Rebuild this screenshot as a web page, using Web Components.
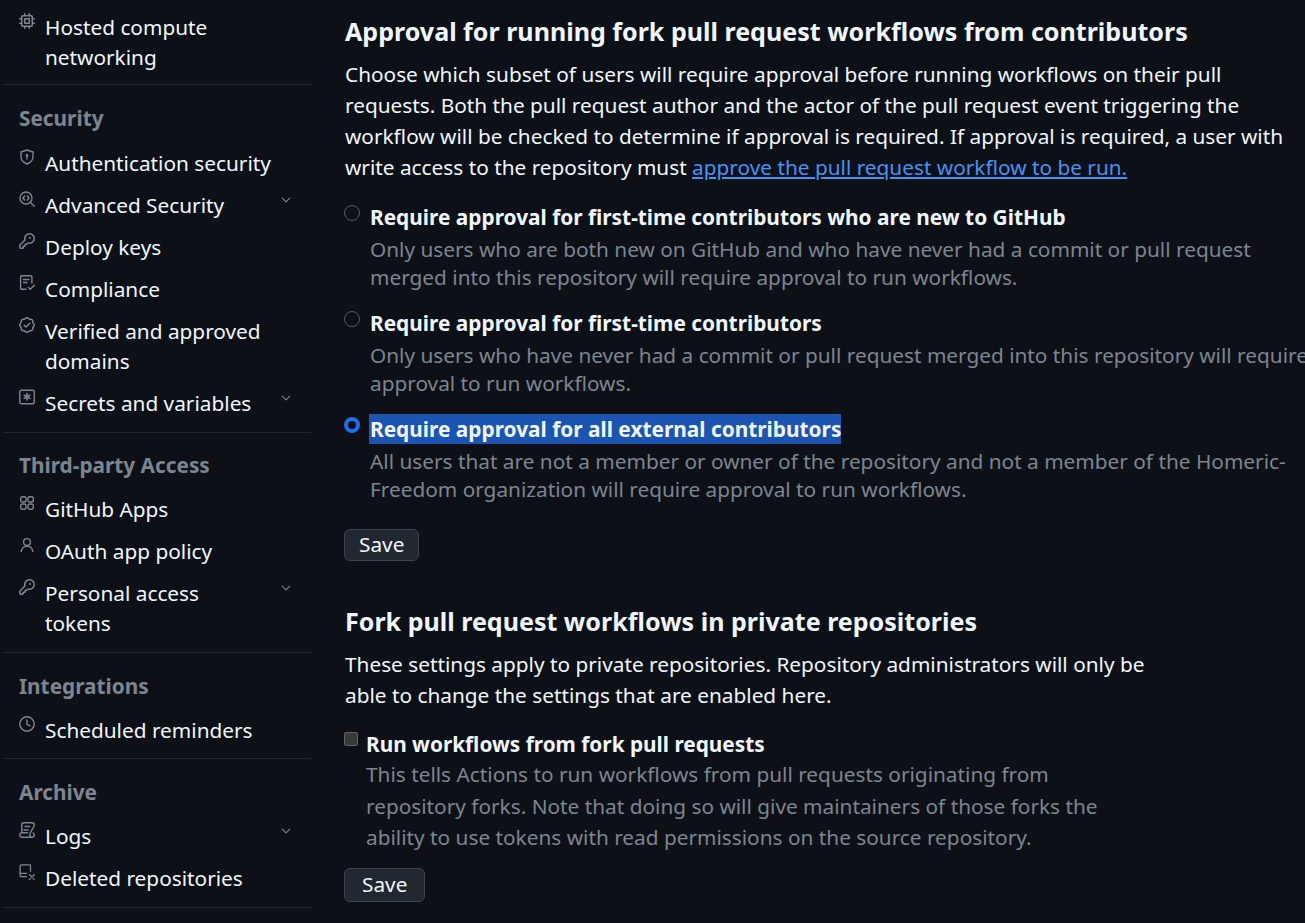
<!DOCTYPE html>
<html lang="en">
<head>
<meta charset="utf-8">
<title>Actions settings</title>
<style>
  html, body { margin: 0; height: 923px; overflow: hidden; background: #0d1117; }
  body { font-family: "Noto Sans", "Liberation Sans", sans-serif; color: #f0f6fc; font-size: 20.8px; }
</style>
</head>
<body>
<settings-page>
  <side-nav slot="side">
    <nav-group flush>
      <nav-item icon="cpu">Hosted compute networking</nav-item>
    </nav-group>
    <nav-group style="--gap: 9px" title="Security">
      <nav-item icon="shield">Authentication security</nav-item>
      <nav-item icon="codescan" more>Advanced Security</nav-item>
      <nav-item icon="key">Deploy keys</nav-item>
      <nav-item icon="checklist">Compliance</nav-item>
      <nav-item icon="verified">Verified and approved domains</nav-item>
      <nav-item icon="asterisk" more>Secrets and variables</nav-item>
    </nav-group>
    <nav-group style="--top: 17px" title="Third-party Access">
      <nav-item icon="apps">GitHub Apps</nav-item>
      <nav-item icon="person">OAuth app policy</nav-item>
      <nav-item icon="key" more>Personal access tokens</nav-item>
    </nav-group>
    <nav-group style="--end: 7px" title="Integrations">
      <nav-item icon="clock">Scheduled reminders</nav-item>
    </nav-group>
    <nav-group title="Archive">
      <nav-item icon="log" more>Logs</nav-item>
      <nav-item icon="deleted">Deleted repositories</nav-item>
    </nav-group>
  </side-nav>

  <form-section title="Approval for running fork pull request workflows from contributors">
    <span slot="intro">Choose which subset of users will require approval before running workflows on their pull requests. Both the pull request author and the actor of the pull request event triggering the workflow will be checked to determine if approval is required. If approval is required, a user with write access to the repository must <a-link>approve the pull request workflow to be run.</a-link></span>
    <radio-option label="Require approval for first-time contributors who are new to GitHub">Only users who are both new on GitHub and who have never had a commit or pull request merged into this repository will require approval to run workflows.</radio-option>
    <radio-option label="Require approval for first-time contributors">Only users who have never had a commit or pull request merged into this repository will require approval to run workflows.</radio-option>
    <radio-option checked label="Require approval for all external contributors">All users that are not a member or owner of the repository and not a member of the Homeric-Freedom organization will require approval to run workflows.</radio-option>
    <save-button>Save</save-button>
  </form-section>

  <form-section narrow second title="Fork pull request workflows in private repositories">
    <span slot="intro">These settings apply to private repositories. Repository administrators will only be able to change the settings that are enabled here.</span>
    <check-option label="Run workflows from fork pull requests">This tells Actions to run workflows from pull requests originating from repository forks. Note that doing so will give maintainers of those forks the ability to use tokens with read permissions on the source repository.</check-option>
    <save-button wide>Save</save-button>
  </form-section>
</settings-page>

<script>
const ICONS = {
  cpu: '<path fill="currentColor" d="M6.5.75a.75.75 0 0 0-1.5 0V2H3.75A1.75 1.75 0 0 0 2 3.75V5H.75a.75.75 0 0 0 0 1.5H2v3H.75a.75.75 0 0 0 0 1.5H2v1.25c0 .966.784 1.75 1.75 1.75H5v1.25a.75.75 0 0 0 1.5 0V14h3v1.25a.75.75 0 0 0 1.5 0V14h1.25A1.75 1.75 0 0 0 14 12.25V11h1.25a.75.75 0 0 0 0-1.5H14v-3h1.25a.75.75 0 0 0 0-1.5H14V3.75A1.75 1.75 0 0 0 12.25 2H11V.75a.75.75 0 0 0-1.5 0V2h-3Zm5.75 11.75h-8.5a.25.25 0 0 1-.25-.25v-8.5a.25.25 0 0 1 .25-.25h8.5a.25.25 0 0 1 .25.25v8.5a.25.25 0 0 1-.25.25ZM5.75 5h4.5a.75.75 0 0 1 .75.75v4.5a.75.75 0 0 1-.75.75h-4.5a.75.75 0 0 1-.75-.75v-4.5A.75.75 0 0 1 5.75 5Zm.75 4.5h3v-3h-3Z"/>',
  shield: '<g fill="none" stroke="currentColor" stroke-width="1.4" stroke-linejoin="round"><path d="M8 1 2 3v4.5c0 3.6 2.4 6 6 7.5 3.6-1.5 6-3.9 6-7.5V3Z"/></g><circle cx="8" cy="6.4" r="1.3" fill="currentColor"/><path d="M8 7v3" stroke="currentColor" stroke-width="1.4" stroke-linecap="round"/>',
  codescan: '<g fill="none" stroke="currentColor" stroke-width="1.4" stroke-linecap="round" stroke-linejoin="round"><circle cx="7" cy="7" r="6"/><path d="m11.4 11.4 3.9 3.9M5.6 5 3.9 7l1.7 2M8.4 5l1.7 2-1.7 2"/></g>',
  key: '<path fill="currentColor" d="M10.5 0a5.499 5.499 0 1 1-1.288 10.848l-.932.932a.75.75 0 0 1-.53.22H7v.75a.75.75 0 0 1-.22.53l-.5.5a.75.75 0 0 1-.53.22H5v.75a.75.75 0 0 1-.22.53l-.5.5a.75.75 0 0 1-.53.22h-2A1.75 1.75 0 0 1 0 14.25v-2c0-.199.079-.389.22-.53l4.932-4.932A5.5 5.5 0 0 1 10.5 0Zm-4 5.5c-.001.431.069.86.205 1.269a.75.75 0 0 1-.181.768L1.5 12.56v1.69c0 .138.112.25.25.25h1.69l.06-.06v-1.19a.75.75 0 0 1 .75-.75h1.19l.06-.06v-1.19a.75.75 0 0 1 .75-.75h1.19l1.023-1.025a.75.75 0 0 1 .768-.18A4 4 0 1 0 6.5 5.5ZM11 6a1 1 0 1 1 0-2 1 1 0 0 1 0 2Z"/>',
  checklist: '<g fill="none" stroke="currentColor" stroke-width="1.4" stroke-linecap="round" stroke-linejoin="round"><path d="M7 14.2H2.6a1 1 0 0 1-1-1V1.8a1 1 0 0 1 1-1h9.3a1 1 0 0 1 1 1V8"/><path d="M4.5 4.5h5.5M4.5 7.5h3.5M9.5 12.5l1.8 1.8 4-4"/></g>',
  verified: '<path fill="currentColor" d="m9.585.52.929.68c.153.112.331.186.518.215l1.138.175a2.678 2.678 0 0 1 2.24 2.24l.174 1.139c.029.187.103.365.215.518l.68.928a2.677 2.677 0 0 1 0 3.17l-.68.928a1.174 1.174 0 0 0-.215.518l-.175 1.138a2.678 2.678 0 0 1-2.241 2.241l-1.138.175a1.17 1.17 0 0 0-.518.215l-.928.68a2.677 2.677 0 0 1-3.17 0l-.928-.68a1.174 1.174 0 0 0-.518-.215L3.83 14.41a2.678 2.678 0 0 1-2.24-2.24l-.175-1.138a1.17 1.17 0 0 0-.215-.518l-.68-.928a2.677 2.677 0 0 1 0-3.17l.68-.928c.112-.153.186-.331.215-.518l.175-1.14a2.678 2.678 0 0 1 2.24-2.24l1.139-.175c.187-.029.365-.103.518-.215l.928-.68a2.677 2.677 0 0 1 3.17 0ZM7.303 1.728l-.927.68a2.67 2.67 0 0 1-1.18.489l-1.137.174a1.179 1.179 0 0 0-.987.987l-.174 1.136a2.677 2.677 0 0 1-.489 1.18l-.68.928a1.18 1.18 0 0 0 0 1.394l.68.927c.256.348.424.753.489 1.18l.174 1.137c.078.509.478.909.987.987l1.136.174a2.67 2.67 0 0 1 1.18.489l.928.68c.414.305.979.305 1.394 0l.927-.68a2.67 2.67 0 0 1 1.18-.489l1.137-.174a1.18 1.18 0 0 0 .987-.987l.174-1.136a2.67 2.67 0 0 1 .489-1.18l.68-.928a1.176 1.176 0 0 0 0-1.394l-.68-.927a2.686 2.686 0 0 1-.489-1.18l-.174-1.137a1.179 1.179 0 0 0-.987-.987l-1.136-.174a2.677 2.677 0 0 1-1.18-.489l-.928-.68a1.176 1.176 0 0 0-1.394 0ZM11.28 6.78l-3.75 3.75a.75.75 0 0 1-1.06 0L4.72 8.78a.751.751 0 0 1 .018-1.042.751.751 0 0 1 1.042-.018L7 8.94l3.22-3.22a.751.751 0 0 1 1.042.018.751.751 0 0 1 .018 1.042Z"/>',
  asterisk: '<rect x=".75" y="1.25" width="14.5" height="13.5" rx="1.5" fill="none" stroke="currentColor" stroke-width="1.4"/><path d="M8 4.6v6.4M5.2 6.2l5.6 3.2M10.8 6.2 5.2 9.4" stroke="currentColor" stroke-width="1.6" stroke-linecap="round"/>',
  apps: '<g fill="none" stroke="currentColor" stroke-width="1.4"><rect x="1.7" y="1.7" width="5.3" height="5.3" rx="1.8"/><rect x="9" y="1.7" width="5.3" height="5.3" rx="1.8"/><rect x="1.7" y="9" width="5.3" height="5.3" rx="1.8"/><rect x="9" y="9" width="5.3" height="5.3" rx="1.8"/></g>',
  person: '<g fill="none" stroke="currentColor" stroke-width="1.4" stroke-linecap="round"><circle cx="8" cy="5" r="3.4"/><path d="M2.2 14.6c.2-3 2.4-5.4 5.8-5.4s5.6 2.4 5.8 5.4"/></g>',
  clock: '<g fill="none" stroke="currentColor" stroke-width="1.4" stroke-linecap="round" stroke-linejoin="round"><circle cx="8" cy="8" r="7.2"/><path d="M8 4v4.4l3 1.5"/></g>',
  log: '<g fill="none" stroke="currentColor" stroke-width="1.4" stroke-linecap="round" stroke-linejoin="round"><path d="M13 .75H5A2.25 2.25 0 0 0 2.75 3v7M13 .75A2.25 2.25 0 0 1 15.25 3c0 2.8-4.5 6.8-4.5 10a2.25 2.25 0 0 0 4.5 0 2.2 2.2 0 0 0-1-1.9M13 15.25H3A2.25 2.25 0 0 1 .75 13 2.25 2.25 0 0 1 3 10.75h5.5"/><path d="M6 4.5h4.5M5 8h4"/></g>',
  deleted: '<g fill="none" stroke="currentColor" stroke-width="1.3" stroke-linecap="round" stroke-linejoin="round"><path d="M7.4 12.6H2.4a1.3 1.3 0 0 1-1.3-1.3V2.2A1.4 1.4 0 0 1 2.5.8h8.4a.6.6 0 0 1 .6.6V7.4"/><path d="M1.1 9.4h6.3M10.6 10.8l4.6 4.6M15.2 10.8l-4.6 4.6"/></g>'
};

class SettingsPage extends HTMLElement {
  constructor() {
    super();
    this.attachShadow({ mode: "open" });
    this.shadowRoot.innerHTML = `<style>
        :host { display: grid; grid-template-columns: 311px 980px; column-gap: 34px; }
        main { padding-top: 13px; min-width: 0; }
      </style>
      <slot name="side"></slot>
      <main><slot></slot></main>`;
  }
}

class SideNav extends HTMLElement {
  constructor() {
    super();
    this.attachShadow({ mode: "open" });
    this.shadowRoot.innerHTML = `<style>
        :host { display: block; padding: 6px 0 0 3px; }
      </style>
      <slot></slot>`;
  }
}

class NavGroup extends HTMLElement {
  constructor() {
    super();
    this.attachShadow({ mode: "open" });
  }
  connectedCallback() {
    const title = this.getAttribute("title");
    this.removeAttribute("title");
    this.shadowRoot.innerHTML = `<style>
        :host { display: block; border-bottom: 1px solid #21262d; padding-bottom: var(--end, 8px); }
        :host([flush]) { padding-bottom: 6px; }
        h3 { margin: 0; padding: var(--top, 18px) 0 var(--gap, 8px) 16px; font-size: 20.8px; line-height: 30px; font-weight: 700; color: #7d8590; }
      </style>
      ${title ? `<h3>${title}</h3>` : ""}
      <slot></slot>`;
  }
}

class NavItem extends HTMLElement {
  constructor() {
    super();
    this.attachShadow({ mode: "open" });
  }
  connectedCallback() {
    const icon = ICONS[this.getAttribute("icon")] || "";
    const more = this.hasAttribute("more");
    this.shadowRoot.innerHTML = `<style>
        :host { display: flex; padding: 6px 17px 6px 16px; gap: 10px; font-size: 20.8px; line-height: 30px; color: #f0f6fc; position: relative; }
        svg { flex: none; width: 16px; height: 16px; color: #7d8590; }
        .ico { margin-top: 1px; }
        .label { flex: 1; max-width: 228px; }
        :host([more]) .label { max-width: 215px; }
        .more { position: absolute; right: 19px; top: 10px; width: 12px; height: 12px; }
      </style>
      <svg class="ico" viewBox="0 0 16 16">${icon}</svg>
      <span class="label"><slot></slot></span>
      ${more ? `<svg class="more" viewBox="0 0 16 16"><path d="M3 5.5 8 10.5l5-5" fill="none" stroke="currentColor" stroke-width="1.5" stroke-linecap="round" stroke-linejoin="round"/></svg>` : ""}`;
  }
}

class FormSection extends HTMLElement {
  constructor() {
    super();
    this.attachShadow({ mode: "open" });
  }
  connectedCallback() {
    const title = this.getAttribute("title");
    this.removeAttribute("title");
    this.shadowRoot.innerHTML = `<style>
        :host { display: block; }
        :host([second]) { margin-top: 42px; }
        h2 { margin: 0 0 10px; font-size: 25.05px; line-height: 36px; font-weight: 700; color: #f0f6fc; }
        p { margin: 0 0 19px; max-width: 950px; font-size: 20.8px; line-height: 31px; color: #f0f6fc; }
        :host([narrow]) p { max-width: 815px; margin-bottom: 18px; }
      </style>
      <h2>${title}</h2>
      <p><slot name="intro"></slot></p>
      <slot></slot>`;
  }
}

class ALink extends HTMLElement {
  constructor() {
    super();
    this.attachShadow({ mode: "open" });
    this.shadowRoot.innerHTML = `<style>
        :host { display: inline; color: #4493f8; text-decoration: underline; }
      </style>
      <slot></slot>`;
  }
}

class RadioOption extends HTMLElement {
  constructor() {
    super();
    this.attachShadow({ mode: "open" });
  }
  connectedCallback() {
    this.shadowRoot.innerHTML = `<style>
        :host { display: grid; grid-template-columns: 16px 1fr; column-gap: 9px; margin-bottom: 17px; }
        .dot { box-sizing: border-box; width: 16px; height: 16px; margin: 3px 0 0 -1px; border-radius: 50%; border: 1px solid #565b63; }
        :host([checked]) .dot { margin-top: 3px; border: 4.5px solid #1f6feb; background: #0d1117; }
        .label { font-size: 20.85px; line-height: 30px; font-weight: 700; color: #f0f6fc; }
        mark { display: inline-block; margin-left: -1px; padding-left: 1px; background: none; color: inherit; }
        :host([checked]) mark { background: #1c54b2; }
        .note { grid-column: 2; margin-top: 4px; font-size: 20.8px; line-height: 27.5px; color: #7d8590; }
      </style>
      <div class="dot"></div>
      <div class="label"><mark>${this.getAttribute("label")}</mark></div>
      <div class="note"><slot></slot></div>`;
  }
}

class CheckOption extends HTMLElement {
  constructor() {
    super();
    this.attachShadow({ mode: "open" });
  }
  connectedCallback() {
    this.shadowRoot.innerHTML = `<style>
        :host { display: grid; grid-template-columns: 14px 1fr; column-gap: 7px; margin: 3px 0 14.5px; max-width: 770px; }
        .box { box-sizing: border-box; width: 14px; height: 14px; margin: 3px 0 0 -1px; border-radius: 2px; border: 1px solid #5f6368; background: #3a3a3a; }
        .label { font-size: 20.8px; line-height: 30px; font-weight: 700; color: #f0f6fc; }
        .note { grid-column: 2; font-size: 20.8px; line-height: 31.5px; color: #7d8590; }
      </style>
      <div class="box"></div>
      <div class="label">${this.getAttribute("label")}</div>
      <div class="note"><slot></slot></div>`;
  }
}

class SaveButton extends HTMLElement {
  constructor() {
    super();
    this.attachShadow({ mode: "open" });
    this.shadowRoot.innerHTML = `<style>
        :host { display: inline-block; box-sizing: border-box; height: 32px; padding: 0 14px; margin: 9px 0 0 -1px; border: 1px solid #3d444d; border-radius: 6px; background: #212830; color: #f0f6fc; font-size: 20.8px; line-height: 29px; }
        :host([wide]) { height: 34px; padding: 0 17px; line-height: 31px; margin-top: 0; }
      </style>
      <slot></slot>`;
  }
}

customElements.define("settings-page", SettingsPage);
customElements.define("side-nav", SideNav);
customElements.define("nav-group", NavGroup);
customElements.define("nav-item", NavItem);
customElements.define("form-section", FormSection);
customElements.define("a-link", ALink);
customElements.define("radio-option", RadioOption);
customElements.define("check-option", CheckOption);
customElements.define("save-button", SaveButton);
</script>
</body>
</html>
